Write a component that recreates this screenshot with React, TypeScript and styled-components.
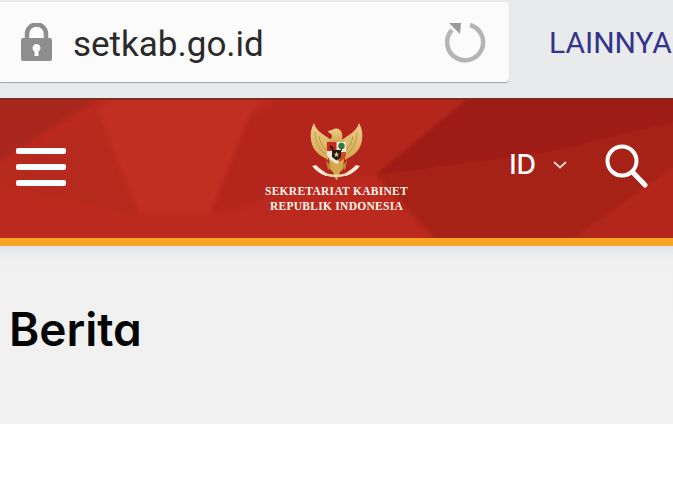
import styled, { createGlobalStyle } from 'styled-components';

const GlobalStyle = createGlobalStyle`
  html, body {
    margin: 0;
    padding: 0;
    background: #fff;
    overflow: hidden;
  }
  * {
    box-sizing: border-box;
  }
`;

const Page = styled.div`
  width: 673px;
  height: 484px;
  display: flex;
  flex-direction: column;
  background: #fff;
`;

const BrowserBar = styled.div`
  height: 98px;
  flex: none;
  display: flex;
  align-items: flex-start;
  padding-top: 2px;
  background: #e8eaec;
  overflow: hidden;
`;

const UrlBox = styled.div`
  width: 509px;
  height: 80px;
  flex: none;
  display: flex;
  align-items: center;
  padding: 0 22px 0 21px;
  background: #fbfbfb;
  border-radius: 0 4px 4px 0;
  box-shadow: 0 1px 1px rgba(0, 0, 0, 0.3);
`;

const UrlText = styled.span`
  flex: 1;
  margin: 4px 0 0 21px;
  font: 400 35px/1 Roboto, sans-serif;
  color: #2a2a2a;
`;

const MoreLink = styled.span`
  margin: 26px 0 0 40px;
  font: 400 30px/1 Roboto, sans-serif;
  color: #33338c;
  white-space: nowrap;
`;

const Header = styled.header`
  position: relative;
  height: 148px;
  flex: none;
  display: grid;
  grid-template-columns: 1fr auto 1fr;
  align-items: start;
  border-bottom: 8px solid #f6a623;
  background: #bc2a1f;
  overflow: hidden;
`;

const Facets = styled.svg`
  position: absolute;
  left: 0;
  top: 0;
  width: 673px;
  height: 140px;
`;

const MenuButton = styled.div`
  position: relative;
  display: flex;
  flex-direction: column;
  gap: 10px;
  width: 50px;
  margin: 50px 0 0 16px;
`;

const MenuLine = styled.span`
  display: block;
  height: 6px;
  background: #fff;
  border-radius: 2px;
`;

const Brand = styled.div`
  position: relative;
  display: flex;
  flex-direction: column;
  align-items: center;
  padding-top: 23px;
`;

const BrandName = styled.div`
  margin-top: 3px;
  font: 700 11.5px/15px 'Liberation Serif', serif;
  letter-spacing: 0.28px;
  text-align: center;
  color: #fbf3ea;
  white-space: nowrap;
`;

const Tools = styled.div`
  position: relative;
  display: flex;
  align-items: center;
  justify-content: flex-end;
  padding: 45px 25px 0 0;
`;

const Lang = styled.span`
  margin-bottom: 3px;
  font: 500 27px/1 Inter, sans-serif;
  color: #fff;
`;

const Chevron = styled.svg`
  margin: 0 37px 3px 17px;
`;

const Hero = styled.section`
  height: 178px;
  flex: none;
  padding: 60px 0 0 9px;
  background: linear-gradient(#dfe3e4, #f0f0f0 12px, #f1f1f1);
`;

const Title = styled.h1`
  margin: 0;
  font: 600 46px/1 Inter, sans-serif;
  font-feature-settings: 'cv11' 1;
  color: #050505;
`;

function LockIcon() {
  return (
    <svg width="31" height="38" viewBox="0 0 31 38">
      <path d="M6 16V11a9.5 9.5 0 0 1 19 0v5" fill="none" stroke="#8e8e8e" strokeWidth="4.5" />
      <path
        fillRule="evenodd"
        fill="#8e8e8e"
        d="M2 15h27a2 2 0 0 1 2 2v19a2 2 0 0 1-2 2H2a2 2 0 0 1-2-2V17a2 2 0 0 1 2-2zM15.5 21a4 4 0 0 0-2 7.4V33h4v-4.6a4 4 0 0 0-2-7.4z"
      />
    </svg>
  );
}

function ReloadIcon() {
  return (
    <svg width="42" height="41" viewBox="0 0 42 41">
      <path d="M25 3A18 18 0 1 1 7 8" fill="none" stroke="#b4b4b4" strokeWidth="4.5" />
      <path d="M4 1h12l-1 11z" fill="#9a9a9a" />
    </svg>
  );
}

function Emblem() {
  return (
    <svg width="56" height="60" viewBox="309 121 56 60">
      <defs>
        <linearGradient id="gold" x1="0" y1="0" x2="0" y2="1">
          <stop offset="0" stopColor="#eccf86" />
          <stop offset="1" stopColor="#d3a853" />
        </linearGradient>
      </defs>
      {/* wings */}
      <path d="M315 123c-3 5-4 11-3 17 1 7 5 13 12 17l5 3 3-20-4-3c-5-3-11-7-13-14z" fill="url(#gold)" />
      <path d="M360 123c3 5 4 11 3 17-1 7-5 13-12 17l-5 3-3-20 4-3c5-3 11-7 13-14z" fill="url(#gold)" />
      <path
        d="M316 132c0 8 3 16 9 21M320 136c1 6 3 10 7 14M358 132c0 8-3 16-9 21M354 136c-1 6-3 10-7 14"
        fill="none"
        stroke="#b58a3c"
        strokeWidth="0.8"
      />
      {/* head and neck */}
      <path d="M329 131l4-1c2-2 6-2 8 0 2 2 3 6 2 9l3 3h-17l4-5c0-2-1-4-3-4z" fill="url(#gold)" />
      {/* tail and feet */}
      <path d="M330 159h15l-1 10-3 3-3 8-1 0-3-8-3-3z" fill="#d4a84b" />
      <path d="M327 160l5 7-3 3zM348 160l-5 7 3 3z" fill="#b98c3e" />
      {/* ribbon */}
      <path d="M313 166l4-1c3 3 7 6 10 8l3 2c-1 0-2 1-3 1-6-2-11-6-14-10zM361 166l-4-1c-3 3-7 6-10 8l-3 2c1 0 2 1 3 1 6-2 11-6 14-10z" fill="#f4ecd8" />
      <path d="M327 173c6 2 14 2 20 0l1 2c-7 3-15 3-22 0z" fill="#e6d9b4" />
      {/* shield */}
      <path d="M328 142h19v12c0 4-5 7-9.500 10-4.500-3-9.500-6-9.500-10z" fill="#efe9dc" />
      <path d="M328 142h9.500v9h-9.500z" fill="#c8281e" />
      <path d="M338 152h9v2c0 4-3 6-7 8l-2-4z" fill="#cf4a22" />
      <path d="M331 145l4 3-1 2-3-2z" fill="#2a1c18" />
      <circle cx="342.500" cy="146" r="3.200" fill="#2d7a3a" />
      <rect x="342" y="148" width="1" height="3" fill="#5a3a20" />
      <path d="M333 150h9v7l-4.500 3.500-4.500-3.500z" fill="#1c1a18" />
      <path d="M337.500 151.500l.9 2.300h2.100l-1.800 1.300.8 2.200-2-1.300-2 1.300.8-2.200-1.800-1.300h2.100z" fill="#e6c65a" />
    </svg>
  );
}

function SearchIcon() {
  return (
    <svg width="44" height="46" viewBox="0 0 44 46">
      <circle cx="18" cy="18" r="14.500" fill="none" stroke="#fff" strokeWidth="4" />
      <path d="M28.500 29L41 42" stroke="#fff" strokeWidth="5" strokeLinecap="round" />
    </svg>
  );
}

export default function App() {
  return (
    <Page>
      <GlobalStyle />
      <BrowserBar>
        <UrlBox>
          <LockIcon />
          <UrlText>setkab.go.id</UrlText>
          <ReloadIcon />
        </UrlBox>
        <MoreLink>LAINNYA</MoreLink>
      </BrowserBar>
      <Header>
        <Facets viewBox="0 0 673 140">
          <defs>
            <filter id="soft" x="-5%" y="-5%" width="110%" height="110%">
              <feGaussianBlur stdDeviation="2" />
            </filter>
          </defs>
          <rect x="-10" y="-10" width="693" height="160" fill="#bc2a1f" />
          <g filter="url(#soft)">
            <polygon points="-10,-10 115,-10 -10,70" fill="#a9271b" />
            <polygon points="98,17 -10,75 -10,85 140,117" fill="#b5291d" />
            <polygon points="98,17 115,-10 270,-10 250,17 210,117 140,117" fill="#c12d21" />
            <polygon points="250,17 300,-10 480,-10 375,77 290,95 210,117" fill="#b4281d" />
            <polygon points="480,-10 683,-10 683,22 543,55 375,77" fill="#9e1f14" />
            <polygon points="375,77 543,55 683,22 683,62 560,150 443,150" fill="#a62116" />
            <polygon points="683,62 560,150 683,150" fill="#b3281e" />
          </g>
          <rect x="0" y="0" width="673" height="2" fill="#7c2a22" />
        </Facets>
        <MenuButton>
          <MenuLine />
          <MenuLine />
          <MenuLine />
        </MenuButton>
        <Brand>
          <Emblem />
          <BrandName>
            SEKRETARIAT KABINET
            <br />
            REPUBLIK INDONESIA
          </BrandName>
        </Brand>
        <Tools>
          <Lang>ID</Lang>
          <Chevron width="14" height="8" viewBox="0 0 14 8">
            <path d="M1 1l6 5.500L13 1" fill="none" stroke="#f4dcd8" strokeWidth="1.800" />
          </Chevron>
          <SearchIcon />
        </Tools>
      </Header>
      <Hero>
        <Title>Berita</Title>
      </Hero>
    </Page>
  );
}
